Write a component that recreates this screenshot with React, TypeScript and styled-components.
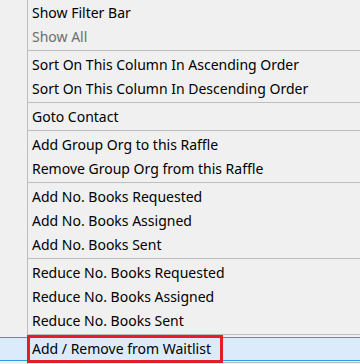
import styled, { createGlobalStyle } from "styled-components";

const GlobalStyle = createGlobalStyle`
  html, body {
    margin: 0;
    padding: 0;
    background: #f0f0f0;
  }
  body {
    font-family: "Noto Sans", "Open Sans", sans-serif;
    font-size: 14px;
    color: #000;
  }
`;

const Menu = styled.div`
  display: flex;
  flex-direction: column;
  width: 360px;
  height: 364px;
  overflow: hidden;
  padding-top: 1px;
  box-sizing: border-box;
  background: #f0f0f0;
  position: relative;
  &::before {
    content: "";
    position: absolute;
    left: 27px;
    top: 0;
    bottom: 0;
    width: 1px;
    background: #bdbdbd;
  }
`;

const Item = styled.div<{ $disabled?: boolean; $active?: boolean }>`
  position: relative;
  flex: none;
  height: 24px;
  box-sizing: border-box;
  display: flex;
  align-items: center;
  padding-left: 32px;
  white-space: nowrap;
  color: ${(p) => (p.$disabled ? "#6d6d6d" : "#000")};
  background: ${(p) => (p.$active ? "#dcebfb" : "transparent")};
  border-top: 1px solid ${(p) => (p.$active ? "#2c9fe0" : "transparent")};
  border-bottom: 1px solid ${(p) => (p.$active ? "#2c9fe0" : "transparent")};
  z-index: ${(p) => (p.$active ? 1 : 0)};
`;

const Label = styled.span`
  line-height: 24px;
  position: relative;
  top: 0px;
`;

const Separator = styled.div`
  flex: none;
  height: 4px;
  box-sizing: border-box;
  padding-top: 1px;
  margin-left: 28px;
  &::after {
    content: "";
    display: block;
    height: 1px;
    background: #bdbdbd;
  }
`;

const Annotation = styled.div`
  position: absolute;
  left: 27px;
  top: -3px;
  width: 196px;
  height: 28px;
  box-sizing: border-box;
  border: 3px solid #e81c24;
`;

type Entry = { label: string; disabled?: boolean; active?: boolean } | "sep";

const entries: Entry[] = [
  { label: "Show Filter Bar" },
  { label: "Show All", disabled: true },
  "sep",
  { label: "Sort On This Column In Ascending Order" },
  { label: "Sort On This Column In Descending Order" },
  "sep",
  { label: "Goto Contact" },
  "sep",
  { label: "Add Group Org to this Raffle" },
  { label: "Remove Group Org from this Raffle" },
  "sep",
  { label: "Add No. Books Requested" },
  { label: "Add No. Books Assigned" },
  { label: "Add No. Books Sent" },
  "sep",
  { label: "Reduce No. Books Requested" },
  { label: "Reduce No. Books Assigned" },
  { label: "Reduce No. Books Sent" },
  "sep",
  { label: "Add / Remove from Waitlist", active: true },
  "sep",
];

export default function App() {
  return (
    <>
      <GlobalStyle />
      <Menu>
        {entries.map((e, i) =>
          e === "sep" ? (
            <Separator key={i} />
          ) : (
            <Item key={i} $disabled={e.disabled} $active={e.active}>
              <Label>{e.label}</Label>
              {e.active && <Annotation />}
            </Item>
          )
        )}
      </Menu>
    </>
  );
}
